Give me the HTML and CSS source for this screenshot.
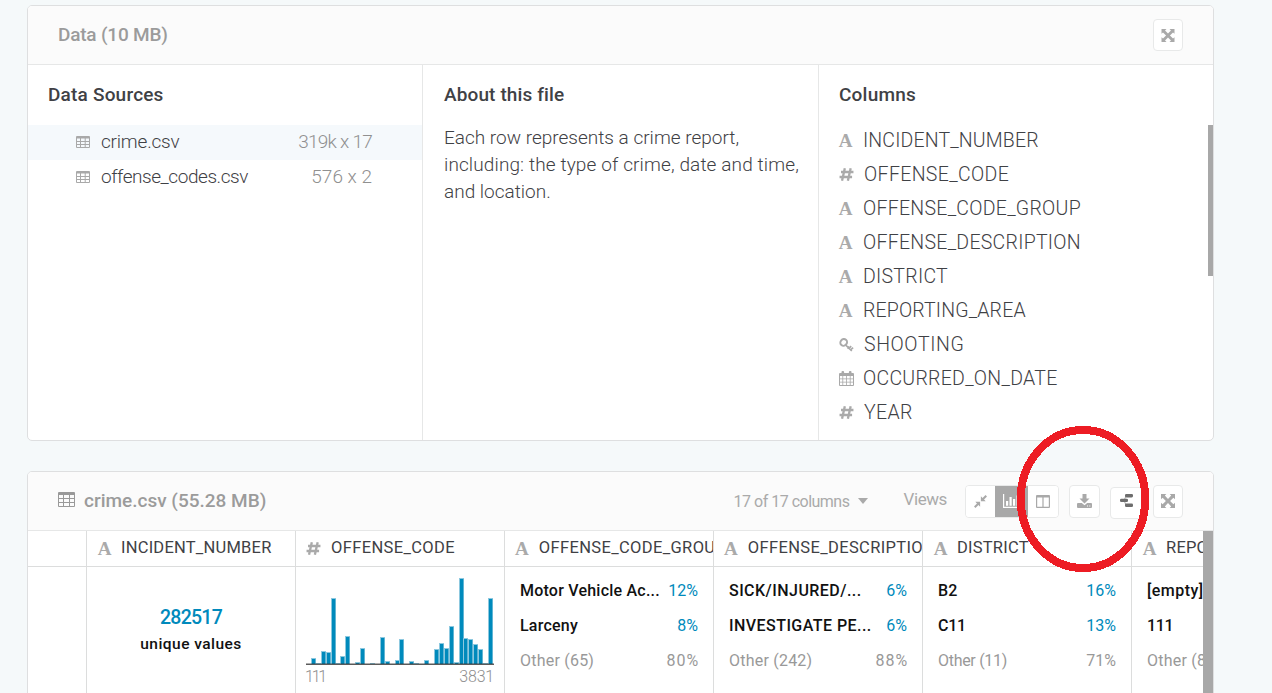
FILE: index.html
```html
<!DOCTYPE html>
<html lang="en">
<head>
<meta charset="utf-8">
<title>Data explorer</title>
<link rel="stylesheet" href="styles.css">
</head>
<body>
<svg class="defs" width="0" height="0">
  <symbol id="table" viewBox="0 0 17 15"><path fill-rule="evenodd" d="M1 0h15a1 1 0 0 1 1 1v13a1 1 0 0 1-1 1H1a1 1 0 0 1-1-1V1a1 1 0 0 1 1-1zM1 3v3h4V3zM6 3v3h5V3zM12 3v3h4V3zM1 7v3h4V7zM6 7v3h5V7zM12 7v3h4V7zM1 11v3h4v-3zM6 11v3h5v-3zM12 11v3h4v-3z"/></symbol>
  <symbol id="table-sm" viewBox="0 0 14 12"><path fill-rule="evenodd" d="M1 0h12a1 1 0 0 1 1 1v10a1 1 0 0 1-1 1H1a1 1 0 0 1-1-1V1a1 1 0 0 1 1-1zM1 2.5V5h3V2.5zM5 2.5V5h3.7V2.5zM9.7 2.5V5H13V2.5zM1 6v2h3V6zM5 6v2h3.7V6zM9.7 6v2H13V6zM1 9v2h3V9zM5 9v2h3.7V9zM9.7 9v2H13V9z"/></symbol>
  <symbol id="expand" viewBox="0 0 14 14"><path d="M0 0h5.4L3.8 1.6 7 4.9l3.2-3.3L8.6 0H14v5.2l-1.6-1.5L9.1 7l3.3 3.3L14 8.8V14H8.6l1.6-1.6L7 9.1l-3.2 3.3L5.4 14H0V8.8l1.6 1.5L4.9 7 1.6 3.7 0 5.2z"/></symbol>
  <symbol id="compress" viewBox="0 0 14 14"><path d="M6.6 7.4v5.2L4.8 10.8 1.6 14 0 12.4l3.2-3.2-1.8-1.8zM7.4 6.6V1.4l1.8 1.8L12.4 0 14 1.6l-3.2 3.2 1.8 1.8z"/></symbol>
  <symbol id="chart" viewBox="0 0 17 14"><path d="M0 0h1.2v12.8H17V14H0zM3 7h2.2v4.8H3zM6.5 3h2.2v8.8H6.5zM10 5h2.2v6.8H10zM13.5 1.5h2.2v10.3h-2.2z"/></symbol>
  <symbol id="columns" viewBox="0 0 14 13"><path fill-rule="evenodd" d="M1 0h12a1 1 0 0 1 1 1v11a1 1 0 0 1-1 1H1a1 1 0 0 1-1-1V1a1 1 0 0 1 1-1zM1.2 2.5v9.3h5.2V2.5zM7.6 2.5v9.3h5.2V2.5z"/></symbol>
  <symbol id="download" viewBox="0 0 15 14"><path fill-rule="evenodd" d="M5.5 0h4v4.5h3L7.5 9.6 2.5 4.5h3zM1 9h3.8l2.7 2.3L10.2 9H14a1 1 0 0 1 1 1v3a1 1 0 0 1-1 1H1a1 1 0 0 1-1-1v-3a1 1 0 0 1 1-1zM10 11.5v1h1v-1zM12.3 11.5v1h1v-1z"/></symbol>
  <symbol id="flow" viewBox="0 0 13 13"><path d="M6 2L4 6.5l2 4.5" fill="none" stroke="#aaa"/><rect y="4.8" width="8" height="3.2" rx="1.3"/><rect x="5" y="0" width="8" height="3.4" rx="1.3"/><rect x="5" y="9.6" width="8" height="3.4" rx="1.3"/></symbol>
  <symbol id="key" viewBox="0 0 15 14"><path d="M6.5 6.8L12.8 13M8.5 10.6l1.8-1.9M12.2 8.2l-2 2M11.5 12l2.6-2.4" fill="none" stroke="#aaa" stroke-width="1.7"/><ellipse cx="4.7" cy="4.4" rx="3.2" ry="3.5" transform="rotate(40 4.7 4.4)" fill="none" stroke="#aaa" stroke-width="2"/></symbol>
  <symbol id="calendar" viewBox="0 0 15 15"><path fill-rule="evenodd" d="M1 2h1.5V1a1 1 0 0 1 1-1h.6a1 1 0 0 1 1 1v1h4.8V1a1 1 0 0 1 1-1h.6a1 1 0 0 1 1 1v1H14a1 1 0 0 1 1 1v11a1 1 0 0 1-1 1H1a1 1 0 0 1-1-1V3a1 1 0 0 1 1-1zM1 5v2.4h2.4V5zM4.2 5v2.4h2.9V5zM7.9 5v2.4h2.9V5zM11.6 5v2.4H14V5zM1 8.2v2.5h2.4V8.2zM4.2 8.2v2.5h2.9V8.2zM7.9 8.2v2.5h2.9V8.2zM11.6 8.2v2.5H14V8.2zM1 11.5V14h2.4v-2.5zM4.2 11.5V14h2.9v-2.5zM7.9 11.5V14h2.9v-2.5zM11.6 11.5V14H14v-2.5z"/></symbol>
  <symbol id="hash" viewBox="0 0 15 14"><path d="M5.7.3L2.7 13.7M12 .3L9 13.7M1.6 4.3H15M0 9.7h13.5" fill="none" stroke="#aaa" stroke-width="2.5"/></symbol>
</svg>

<section class="panel overview">
  <header class="bar">
    <h2 class="title t1">Data (10 MB)</h2>
    <button class="btn"><svg width="14" height="13"><use href="#expand"/></svg></button>
  </header>
  <div class="three">
    <div class="col sources">
      <h3>Data Sources</h3>
      <div class="file active"><svg width="14" height="12"><use href="#table-sm"/></svg><span class="f1">crime.csv</span><em class="d1">319k x 17</em></div>
      <div class="file"><svg width="14" height="12"><use href="#table-sm"/></svg><span class="f2">offense_codes.csv</span><em>576 x 2</em></div>
    </div>
    <div class="col about">
      <h3>About this file</h3>
      <p>Each row represents a crime report,<br><span class="wide">including: the type of crime, date and time,</span><br>and location.</p>
    </div>
    <div class="col fields">
      <h3>Columns</h3>
      <div class="scroll">
        <ul>
          <li><b class="a">A</b><span>INCIDENT_NUMBER</span></li>
          <li><svg width="15" height="13"><use href="#hash"/></svg><span class="open">OFFENSE_CODE</span></li>
          <li><b class="a">A</b><span class="mid">OFFENSE_CODE_GROUP</span></li>
          <li><b class="a">A</b><span class="mid">OFFENSE_DESCRIPTION</span></li>
          <li><b class="a">A</b><span class="mid">DISTRICT</span></li>
          <li><b class="a">A</b><span>REPORTING_AREA</span></li>
          <li><svg width="15" height="14"><use href="#key"/></svg><span class="open shooting">SHOOTING</span></li>
          <li><svg width="15" height="15"><use href="#calendar"/></svg><span class="mid">OCCURRED_ON_DATE</span></li>
          <li><svg width="15" height="13"><use href="#hash"/></svg><span class="open">YEAR</span></li>
        </ul>
        <i class="thumb"></i>
      </div>
    </div>
  </div>
</section>

<section class="panel detail">
  <header class="bar">
    <svg class="title-icon" width="17" height="15"><use href="#table"/></svg>
    <h2 class="title">crime.csv (55.28 MB)</h2>
    <span class="count">17 of 17 columns</span><i class="caret"></i>
    <span class="views">Views</span>
    <div class="group">
      <button><svg width="13" height="13"><use href="#compress"/></svg></button>
      <button class="on"><svg width="17" height="14"><use href="#chart"/></svg></button>
      <button><svg width="14" height="13"><use href="#columns"/></svg></button>
    </div>
    <button class="btn dl"><svg width="15" height="14"><use href="#download"/></svg></button>
    <button class="btn flow"><svg width="13" height="13"><use href="#flow"/></svg></button>
    <button class="btn tall"><svg width="14" height="14"><use href="#expand"/></svg></button>
  </header>
  <div class="grid">
    <div class="cells">
      <div class="cell"><div class="th"></div></div>
      <div class="cell">
        <div class="th"><b class="a">A</b><span class="inc">INCIDENT_NUMBER</span></div>
        <div class="unique"><strong>282517</strong><span>unique values</span></div>
      </div>
      <div class="cell">
        <div class="th"><svg width="15" height="13"><use href="#hash"/></svg><span>OFFENSE_CODE</span></div>
        <div class="hist">
          <svg id="bars" width="188" height="88"></svg>
          <div class="range"><span class="min">111</span><span>3831</span></div>
        </div>
      </div>
      <div class="cell">
        <div class="th"><b class="a">A</b><span>OFFENSE_CODE_GROUP</span></div>
        <dl><dt>Motor Vehicle Ac...</dt><dd>12%</dd><dt>Larceny</dt><dd>8%</dd><dt>Other (65)</dt><dd class="pct">80%</dd></dl>
      </div>
      <div class="cell">
        <div class="th"><b class="a">A</b><span>OFFENSE_DESCRIPTION</span></div>
        <dl><dt class="caps">SICK/INJURED/...</dt><dd>6%</dd><dt class="caps">INVESTIGATE PE...</dt><dd>6%</dd><dt>Other (242)</dt><dd class="pct">88%</dd></dl>
      </div>
      <div class="cell">
        <div class="th"><b class="a">A</b><span class="inc">DISTRICT</span></div>
        <dl><dt>B2</dt><dd>16%</dd><dt class="tight">C11</dt><dd>13%</dd><dt class="tight">Other (11)</dt><dd>71%</dd></dl>
      </div>
      <div class="cell">
        <div class="th"><b class="a">A</b><span class="inc">REPORTING_AREA</span></div>
        <dl><dt class="caps">[empty]</dt><dd></dd><dt class="tight">111</dt><dd></dd><dt>Other (876)</dt><dd></dd></dl>
      </div>
    </div>
    <i class="track"></i>
  </div>
</section>
<svg class="ring" width="134" height="148"><ellipse cx="67" cy="74" rx="62.3" ry="69" shape-rendering="crispEdges"/></svg>
<script src="chart.js"></script>
</body>
</html>
```
FILE: styles.css
```css
* { box-sizing: border-box; }
body { margin: 0; height: 693px; overflow: hidden; background: #f5f9fa; font-family: Roboto, "Liberation Sans", sans-serif; color: #3f4145; padding: 5px 58px 0 27px; }
.defs { position: absolute; }
h2, h3, p, ul, dl, dd { margin: 0; padding: 0; }
svg { display: block; fill: #a9a9a9; flex: none; }
span, em, dt, dd, h2, h3 { white-space: nowrap; }
.panel { width: 1187px; background: #fff; border: 1px solid #dedfe0; border-radius: 5px; overflow: hidden; }
.overview { height: 436px; margin-bottom: 30px; }
.detail { height: 240px; border-radius: 5px 5px 0 0; }
.bar { height: 59px; background: #fbfbfb; border-bottom: 1px solid #e6e7e7; display: flex; align-items: center; padding: 0 30px; }
.title { font-size: 19px; font-weight: 500; color: #9b9b9b; line-height: 56px; margin-right: auto; }
.t1 { letter-spacing: -.2px; }
button { padding: 0; background: #fff; display: flex; align-items: center; justify-content: center; }
.btn { width: 30px; height: 32px; border: 1px solid #e8e9e9; border-radius: 4px; }
.tall { height: 33px; }
.three { display: flex; height: 376px; }
.col { width: 396px; border-left: 1px solid #e6e7e7; padding-top: 16px; }
.sources { width: 394px; border: 0; }
.fields { width: 395px; }
h3 { font-size: 19px; font-weight: 500; line-height: 27px; padding-left: 20px; letter-spacing: .2px; }
.about h3 { padding-left: 21px; letter-spacing: .12px; }
.file { height: 35px; display: flex; align-items: center; padding: 0 50px 2px 48px; font-size: 19px; font-weight: 300; }
.file.active { background: #f5f9fc; }
.sources h3, .fields h3 { margin-bottom: 17px; }
.file span { margin-left: 11px; }
.f1 { letter-spacing: -.2px; }
.f2 { letter-spacing: -.45px; }
.file em { margin-left: auto; font-style: normal; color: #909090; }
.d1 { letter-spacing: -.75px; }
.about p { font-size: 19px; font-weight: 300; line-height: 27px; padding: 16px 0 0 21px; }
.wide { letter-spacing: .12px; }
.scroll { display: flex; justify-content: space-between; }
.thumb { width: 5px; height: 151px; background: #a8a8a8; }
ul { list-style: none; padding-left: 20px; }
li { height: 34px; display: flex; align-items: center; font-size: 19.5px; font-weight: 300; padding-bottom: 3px; }
li span { margin-left: 9px; letter-spacing: .15px; }
li .mid { letter-spacing: .27px; }
li .open { margin-left: 10px; letter-spacing: .35px; }
li .shooting { letter-spacing: .6px; }
.a { width: 15px; text-align: center; font: bold 19px/20px "Liberation Serif", serif; color: #aaa; }
li .a { margin-left: -1px; margin-right: 1px; }
.title-icon { margin: -4px 9px 0 0; fill: #999; }
.count { font-size: 16px; color: #aaa; letter-spacing: -.5px; }
.caret { border: 5px solid transparent; border-top: 6px solid #aaa; border-bottom: 0; margin: 0 35px 0 9px; }
.views { font-size: 17px; color: #aaa; margin: -4px 18px 0 0; letter-spacing: -.4px; }
.group { display: flex; width: 94px; height: 33px; border: 1px solid #e8e9e9; border-radius: 4px; overflow: hidden; }
.group button { border: 0; width: 30px; }
.group button:first-child { width: 29px; }
.group .on { background: #a8a8a8; width: 33px; }
.on svg { fill: #fff; }
.dl { width: 31px; height: 33px; margin: 0 10px; }
.flow { width: 33px; height: 32px; margin: 3px 10px 0 0; padding-bottom: 4px; }
.flow svg { fill: #6d6d6d; }
.grid { display: flex; height: 180px; }
.cells { width: 1175px; display: flex; overflow: hidden; }
.cell { flex: none; width: 209px; overflow: hidden; border-left: 1px solid #dcdddd; }
.cell:first-child { width: 58px; border: 0; }
.th { height: 36px; border-bottom: 1px solid #dcdddd; display: flex; align-items: center; padding-left: 10px; font-size: 16.5px; }
.th span { margin: -2px 0 0 10px; letter-spacing: .36px; }
.th .inc { margin-left: 9px; letter-spacing: .22px; }
.track { width: 10px; background: #a8a8a8; }
.unique { display: flex; flex-direction: column; align-items: center; padding-top: 37px; }
.unique strong { font-size: 19.5px; line-height: 28px; font-weight: 500; color: #008abc; letter-spacing: -.75px; }
.unique span { font-size: 15.5px; line-height: 24px; font-weight: 500; color: #111; letter-spacing: .45px; }
.hist { padding: 10px 10px 0; }
#bars { fill: #008abc; }
.range { display: flex; justify-content: space-between; font-size: 16px; line-height: 24px; font-weight: 300; color: #8f8f8f; letter-spacing: -.2px; }
.range .min { letter-spacing: -2.2px; margin-left: -1px; }
dl { display: grid; grid-template-columns: 1fr auto; grid-auto-rows: 35px; line-height: 35px; padding: 6px 15px; font-size: 16px; }
dt { color: #111; font-weight: 500; letter-spacing: .22px; }
dt.caps { letter-spacing: .45px; }
dt.tight { letter-spacing: -.3px; }
dd { color: #008abc; text-align: right; }
.pct { letter-spacing: .9px; margin-right: -1px; }
dt:nth-of-type(3), dd:nth-of-type(3) { color: #999; font-weight: 400; }
.ring { position: absolute; left: 1016px; top: 425px; fill: none; stroke: #ed1c24; stroke-width: 8px; }
```
FILE: chart.js
```js
// Histogram bars: [left edge, height]
const data = [[5,6],[10,1],[15,13],[20,12],[25,66],[30,1],[34,8],[39,28],[49,2],[54,16],[64,1],[74,27],[79,3],[89,4],[93,25],[103,3],[108,1],[118,4],[128,15],[133,21],[138,16],[143,38],[148,2],[153,86],[157,26],[162,25],[167,20],[172,15],[177,1],[182,66]];
const ns = 'http://www.w3.org/2000/svg';
const svg = document.getElementById('bars');
function rect(x, y, w, h, fill) {
  const r = document.createElementNS(ns, 'rect');
  Object.entries({ x, y, width: w, height: h, fill }).forEach(([k, v]) => r.setAttribute(k, v));
  svg.appendChild(r);
}
for (const [x, h] of data) {
  rect(x, 87 - h, 5, h, '#8cc8df');
  rect(x + 1, 88 - h, 3.3, h - 1, '#008abc');
}
rect(0, 86.6, 188, 1.2, '#333');
```
